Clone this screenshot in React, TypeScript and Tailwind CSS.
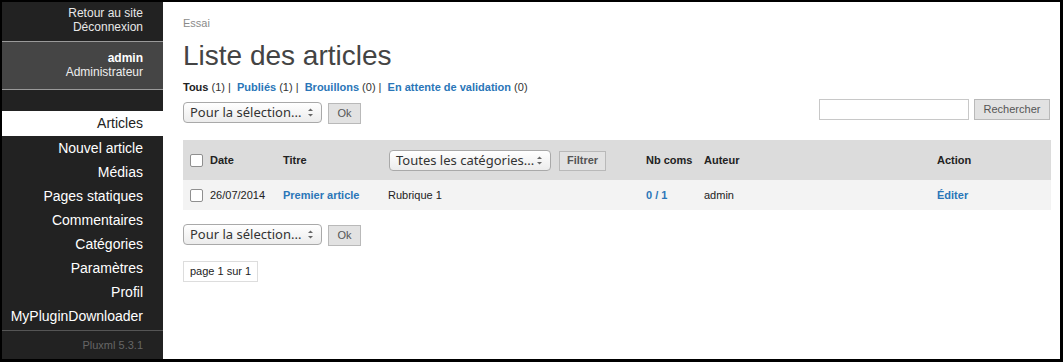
const menu = ['Nouvel article', 'Médias', 'Pages statiques', 'Commentaires', 'Catégories', 'Paramètres', 'Profil', 'MyPluginDownloader'];

function Box() {
  return <span className="inline-block w-[13px] h-[13px] border border-[#8f8f8f] rounded-[2px] bg-white align-middle"></span>;
}

function FakeSelect({ label, width }: { label: string; width: string }) {
  return (
    <div className={`${width} h-[21px] flex items-center justify-between pl-[6px] pr-[7px] border border-[#a9a9a9] rounded-[4px] bg-gradient-to-b from-white to-[#ececec] text-[13px] text-[#333] font-['Noto_Sans','DejaVu_Sans',sans-serif]`}>
      <span className="leading-none">{label}</span>
      <svg width="7" height="11" viewBox="0 0 7 11" className="text-[#666]">
        <path d="M1 4 L3.5 1.5 L6 4 Z" fill="currentColor" />
        <path d="M1 7 L3.5 9.5 L6 7 Z" fill="currentColor" />
      </svg>
    </div>
  );
}

function GrayButton({ label, className }: { label: string; className: string }) {
  return (
    <div className={`${className} flex items-center justify-center bg-[#e2e2e2] border border-[#b9b9b9] text-[11px] text-[#555]`}>{label}</div>
  );
}

function Actions() {
  return (
    <div className="flex items-center gap-[6px]">
      <FakeSelect label="Pour la sélection..." width="w-[139px]" />
      <GrayButton label="Ok" className="w-[33px] h-[21px] mt-[2px]" />
    </div>
  );
}

export default function App() {
  return (
    <div className="w-[1063px] h-[362px] bg-black pt-[2px] pl-[2px] pr-[3px] pb-[3px] font-['Liberation_Sans',Arial,sans-serif]">
      <div className="flex h-full">
        {/* sidebar */}
        <div className="w-[161px] h-full bg-[#222] flex flex-col text-right">
          <div className="h-[39px] pt-[4px] pr-[20px] text-[12px] leading-[14px] text-[#e8e8e8]">
            <p>Retour au site</p>
            <p>Déconnexion</p>
          </div>
          <div className="h-[49px] bg-[#454545] border-y border-[#9a9a9a] pt-[9px] pr-[20px] text-[12px] leading-[14px] text-[#eee]">
            <p className="font-bold text-white">admin</p>
            <p>Administrateur</p>
          </div>
          <div className="h-[21px]"></div>
          <div className="h-[25px] bg-white text-[#222] text-[14px] leading-[25px] pr-[20px]">Articles</div>
          {menu.map(m => (
            <div key={m} className="h-[24px] text-white text-[14px] leading-[24px] pr-[20px] whitespace-nowrap">{m}</div>
          ))}
          <div className="mt-[2px] border-t border-[#555] pt-[6px] pr-[20px] text-[11px] text-[#666]">Pluxml 5.3.1</div>
        </div>

        {/* content */}
        <div className="flex-1 bg-white pl-[20px] pr-[9px] text-[#333]">
          <p className="text-[11px] text-[#8a8a8a] mt-[14px] leading-[14px]">Essai</p>
          <h1 className="text-[28px] text-[#444] leading-[32px] mt-[10px]">Liste des articles</h1>
          <p className="text-[11px] mt-[9px] leading-[13px]">
            <b className="text-[#222]">Tous</b> (1) |&nbsp; <b className="text-[#2a76b8]">Publiés</b> (1) |&nbsp; <b className="text-[#2a76b8]">Brouillons</b> (0) |&nbsp; <b className="text-[#2a76b8]">En attente de validation</b> (0)
          </p>
          <div className="flex items-start justify-between mt-[6px]">
            <div className="mt-[1px]"><Actions /></div>
            <div className="flex items-center gap-[5px] -mt-[1px] mr-[1px]">
              <div className="w-[150px] h-[21px] border border-[#c8c8c8] bg-white"></div>
              <GrayButton label="Rechercher" className="w-[76px] h-[21px]" />
            </div>
          </div>

          <table className="w-[868px] mt-[16px] text-[11px] border-collapse table-fixed">
            <colgroup>
              <col className="w-[22px]" />
              <col className="w-[73px]" />
              <col className="w-[105px]" />
              <col className="w-[258px]" />
              <col className="w-[58px]" />
              <col className="w-[233px]" />
              <col className="w-[119px]" />
            </colgroup>
            <thead>
              <tr className="bg-[#dcdcdc] h-[40px] font-bold text-[#222] text-left">
                <th className="pl-[7px]"><Box /></th>
                <th className="pl-[5px]">Date</th>
                <th className="pl-[5px]">Titre</th>
                <th className="pl-[6px]">
                  <div className="flex items-center gap-[8px] font-normal">
                    <FakeSelect label="Toutes les catégories..." width="w-[162px]" />
                    <GrayButton label="Filtrer" className="w-[47px] h-[20px] mt-[1px] font-bold" />
                  </div>
                </th>
                <th className="pl-[5px] whitespace-nowrap">Nb coms</th>
                <th className="pl-[5px]">Auteur</th>
                <th className="pl-[5px]">Action</th>
              </tr>
            </thead>
            <tbody>
              <tr className="bg-[#f3f3f3] h-[30px] text-[#222]">
                <td className="pl-[7px]"><Box /></td>
                <td className="pl-[5px]">26/07/2014</td>
                <td className="pl-[5px] font-bold text-[#2a76b8] whitespace-nowrap">Premier article</td>
                <td className="pl-[5px]">Rubrique 1</td>
                <td className="pl-[5px] font-bold text-[#2a76b8]">0 / 1</td>
                <td className="pl-[5px]">admin</td>
                <td className="pl-[5px] font-bold text-[#2a76b8]">Éditer</td>
              </tr>
            </tbody>
          </table>

          <div className="mt-[13px]"><Actions /></div>
          <div className="mt-[15px] inline-block border border-[#ddd] px-[6px] h-[21px] leading-[19px] text-[11px] text-[#222]">page 1 sur 1</div>
        </div>
      </div>
    </div>
  );
}
